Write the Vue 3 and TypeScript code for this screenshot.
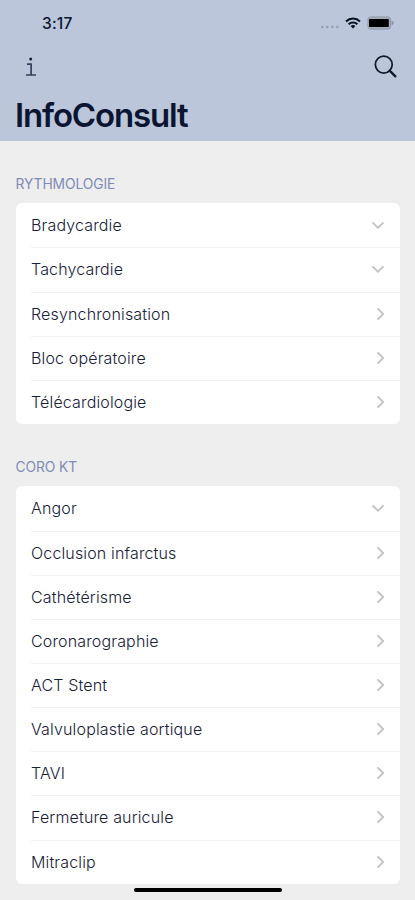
<script setup lang="ts">
interface Item {
  label: string
  expandable?: boolean
}
interface Section {
  title: string
  items: Item[]
}

const sections: Section[] = [
  {
    title: 'RYTHMOLOGIE',
    items: [
      { label: 'Bradycardie', expandable: true },
      { label: 'Tachycardie', expandable: true },
      { label: 'Resynchronisation' },
      { label: 'Bloc opératoire' },
      { label: 'Télécardiologie' },
    ],
  },
  {
    title: 'CORO KT',
    items: [
      { label: 'Angor', expandable: true },
      { label: 'Occlusion infarctus' },
      { label: 'Cathétérisme' },
      { label: 'Coronarographie' },
      { label: 'ACT Stent' },
      { label: 'Valvuloplastie aortique' },
      { label: 'TAVI' },
      { label: 'Fermeture auricule' },
      { label: 'Mitraclip' },
    ],
  },
]
</script>

<template>
  <div class="screen">
    <header class="header">
      <div class="status">
        <span class="time">3:17</span>
        <div class="indicators">
          <svg class="cell" width="20" height="4" viewBox="0 0 20 4">
            <circle v-for="n in 4" :key="n" :cx="n * 5 - 2.7" cy="2" r="1.25" />
          </svg>
          <svg class="wifi" width="16" height="12" viewBox="0 0 16 12">
            <path d="M1 4.4a10.2 10.2 0 0 1 14 0M3.6 7.2a6.4 6.4 0 0 1 8.8 0" />
            <path class="wifi-dot" d="M5.6 9.1a3.5 3.5 0 0 1 4.8 0L8 11.6z" />
          </svg>
          <svg class="battery" width="27" height="14" viewBox="0 0 27 14">
            <rect class="shell" x="0.9" y="0.9" width="22.8" height="12.2" rx="2.8" />
            <rect class="charge" x="2" y="3" width="19.8" height="8" rx="0.8" />
            <path class="tip" d="M24.7 4.8c2.3.7 2.3 3.7 0 4.4z" />
          </svg>
        </div>
      </div>
      <nav class="toolbar">
        <button class="tool info" aria-label="Info">
          <svg width="12" height="20" viewBox="0 0 12 20">
            <path d="M2 7.2H6.1V18M1 18H11" />
            <circle cx="5.7" cy="2.1" r="1.5" />
          </svg>
        </button>
        <button class="tool search" aria-label="Rechercher">
          <svg width="23" height="23" viewBox="0 0 24 24">
            <circle cx="10.2" cy="10" r="8.8" />
            <path d="M16.3 16.3L22.3 22.3" />
          </svg>
        </button>
      </nav>
      <h1 class="title">InfoConsult</h1>
    </header>

    <main class="content">
      <section v-for="section in sections" :key="section.title" class="section">
        <h2 class="heading">{{ section.title }}</h2>
        <ul class="card">
          <li v-for="item in section.items" :key="item.label" class="row">
            <span>{{ item.label }}</span>
            <svg v-if="item.expandable" class="chevron down" width="14" height="9" viewBox="0 0 14 9">
              <path d="M1.5 1.3L7 6.8L12.5 1.3" />
            </svg>
            <svg v-else class="chevron" width="9" height="14" viewBox="0 0 9 14">
              <path d="M1.5 1.3L7.2 7L1.5 12.7" />
            </svg>
          </li>
        </ul>
      </section>
    </main>
    <div class="home-indicator"></div>
  </div>
</template>

<style>
body {
  margin: 0;
  background: #eeeeee;
}
</style>

<style scoped>
.screen {
  position: relative;
  box-sizing: border-box;
  width: 100%;
  height: 900px;
  overflow: hidden;
  background: #eeeeee;
  color: #0b1532;
  font-family: Inter, "Liberation Sans", sans-serif;
}
.header {
  box-sizing: border-box;
  height: 141px;
  padding-top: 12px;
  background: #bbc6da;
}
.status {
  display: flex;
  align-items: center;
  justify-content: space-between;
  height: 22px;
  padding: 0 21px 0 42px;
}
.time {
  font-size: 15.5px;
  font-weight: 500;
  letter-spacing: 0.2px;
}
.indicators {
  display: flex;
  align-items: center;
}
.cell {
  margin: 8px 5px 0 0;
  fill: #929db1;
}
.wifi {
  margin-right: 6.5px;
  fill: none;
  stroke: #07101d;
  stroke-width: 2;
}
.wifi-dot {
  fill: #07101d;
  stroke: none;
}
.shell {
  fill: #a5adbb;
  stroke: #929baa;
  stroke-width: 1;
}
.charge {
  fill: #000000;
}
.tip {
  fill: #858e9d;
}
.toolbar {
  display: flex;
  align-items: flex-start;
  justify-content: space-between;
  height: 60px;
  padding: 20px 18.5px 0 25px;
  box-sizing: border-box;
}
.tool {
  display: flex;
  padding: 0;
  border: 0;
  background: none;
}
.info {
  margin-top: 3px;
}
.search {
  margin-top: 0.7px;
}
.info svg {
  fill: #142039;
}
.info path {
  fill: none;
  stroke: #35415b;
  stroke-width: 1.7;
}
.search svg {
  fill: none;
  stroke: #101a2b;
  stroke-width: 1.8;
  stroke-linecap: round;
}
.search path {
  stroke-width: 2.4;
}
.title {
  margin: 0;
  padding-left: 15px;
  font-size: 33px;
  line-height: 42px;
  font-weight: 600;
  letter-spacing: -1.15px;
}
.content {
  padding: 0 15.5px;
}
.section {
  padding-top: 34px;
}
.section + .section {
  padding-top: 34.2px;
}
.heading {
  margin: 0;
  height: 28.3px;
  color: #7f8bb5;
  font-size: 13.8px;
  line-height: 18px;
  font-weight: 400;
  letter-spacing: -0.07px;
}
.card {
  margin: 0;
  padding: 0 0 0 15.5px;
  list-style: none;
  border-radius: 6px;
  background: #ffffff;
}
.row {
  display: flex;
  align-items: center;
  justify-content: space-between;
  box-sizing: border-box;
  height: 44.15px;
  padding: 0 15px 0.3px 0;
  color: #172039;
  font-size: 16px;
  font-weight: 300;
  letter-spacing: 0.15px;
}
.row + .row {
  box-shadow: inset 0 1px 0 #f0f0f1;
}
.chevron {
  fill: none;
  stroke: #c1c1c4;
  stroke-width: 1.8;
}
.home-indicator {
  position: absolute;
  left: 134px;
  bottom: 8px;
  width: 148px;
  height: 4.5px;
  border-radius: 3px;
  background: #000000;
}
</style>
